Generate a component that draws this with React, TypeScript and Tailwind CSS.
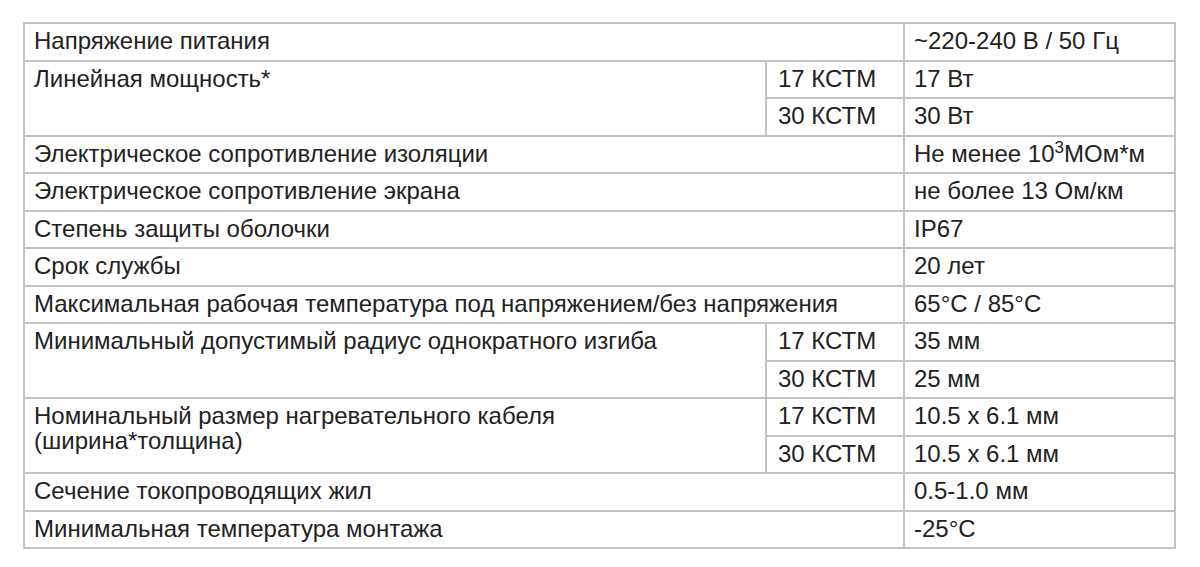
const cell = 'border-2 border-[#c3c3c3] align-top pl-[9px] pr-2 pt-[4px] leading-[25px]'

type Row = { label: string; sub?: [string, React.ReactNode][]; value?: React.ReactNode }

const rows: Row[] = [
  { label: 'Напряжение питания', value: '~220-240 В / 50 Гц' },
  { label: 'Линейная мощность*', sub: [['17 КСТМ', '17 Вт'], ['30 КСТМ', '30 Вт']] },
  {
    label: 'Электрическое сопротивление изоляции',
    value: (
      <>
        Не менее 10<sup className="text-[17px] -top-[9px]">3</sup>МОм*м
      </>
    ),
  },
  { label: 'Электрическое сопротивление экрана', value: 'не более 13 Ом/км' },
  { label: 'Степень защиты оболочки', value: 'IP67' },
  { label: 'Срок службы', value: '20 лет' },
  { label: 'Максимальная рабочая температура под напряжением/без напряжения', value: '65°C / 85°C' },
  { label: 'Минимальный допустимый радиус однократного изгиба', sub: [['17 КСТМ', '35 мм'], ['30 КСТМ', '25 мм']] },
  {
    label: 'Номинальный размер нагревательного кабеля (ширина*толщина)',
    sub: [['17 КСТМ', '10.5 х 6.1 мм'], ['30 КСТМ', '10.5 х 6.1 мм']],
  },
  { label: 'Сечение токопроводящих жил', value: '0.5-1.0 мм' },
  { label: 'Минимальная температура монтажа', value: '-25°C' },
]

export default function App() {
  return (
    <div className="w-[1200px] h-[567px] bg-white pt-[22px] pl-[23px] font-['Liberation_Sans',Arial,sans-serif] text-[24px] text-[#222]">
      <table className="border-collapse table-fixed w-[1151px]">
        <colgroup>
          <col className="w-[742px]" />
          <col className="w-[138px]" />
          <col className="w-[271px]" />
        </colgroup>
        <tbody>
          {rows.map((r) =>
            r.sub ? (
              r.sub.map(([k, v], i) => (
                <tr key={r.label + k} className="h-[37.5px]">
                  {i === 0 && (
                    <td rowSpan={2} className={cell}>
                      {r.label === 'Номинальный размер нагревательного кабеля (ширина*толщина)' ? (
                        <>
                          Номинальный размер нагревательного кабеля
                          <br />
                          (ширина*толщина)
                        </>
                      ) : (
                        r.label
                      )}
                    </td>
                  )}
                  <td className={cell + ' pl-[11px]'}>{k}</td>
                  <td className={cell}>{v}</td>
                </tr>
              ))
            ) : (
              <tr key={r.label} className="h-[37.5px]">
                <td colSpan={2} className={cell}>
                  {r.label}
                </td>
                <td className={cell}>{r.value}</td>
              </tr>
            )
          )}
        </tbody>
      </table>
    </div>
  )
}
